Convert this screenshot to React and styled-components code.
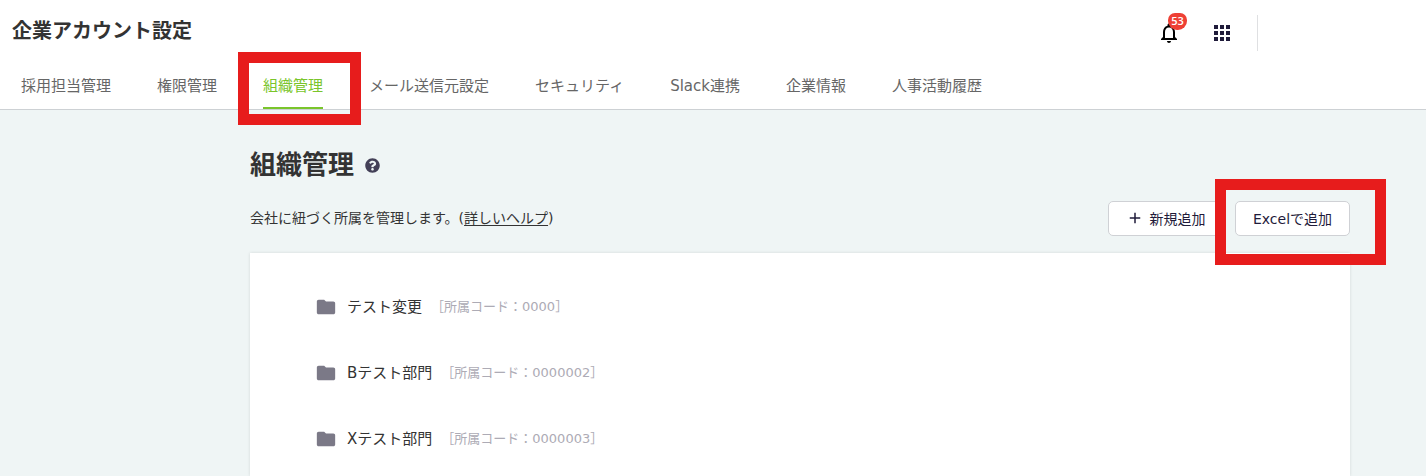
import React from 'react';
import styled, { createGlobalStyle } from 'styled-components';
import { MdAdd, MdApps, MdFolder, MdNotificationsNone } from 'react-icons/md';
import { FaQuestionCircle } from 'react-icons/fa';

const GlobalStyle = createGlobalStyle`
  * {
    box-sizing: border-box;
  }

  body {
    margin: 0;
    background: #fff;
    color: #333;
    font-family: 'DejaVu Sans', 'Noto Sans CJK JP', sans-serif;
    font-size: 14px;
  }

  button {
    font-family: inherit;
  }
`;

const Page = styled.div`
  min-height: 100vh;
  margin-right: 2px;
  display: flex;
  flex-direction: column;
`;

const Header = styled.header`
  border-bottom: 1px solid #cdd1d4;
`;

const TopBar = styled.div`
  height: 62px;
  padding: 0 168px 0 12px;
  display: flex;
  align-items: center;
  justify-content: space-between;
`;

const AppTitle = styled.div`
  font-size: 20px;
  line-height: 24px;
  font-weight: bold;
`;

const Actions = styled.div`
  display: flex;
  align-items: center;
  padding-top: 4px;
`;

const IconButton = styled.button`
  position: relative;
  display: flex;
  width: 24px;
  height: 24px;
  margin-right: ${(props) => props.$gap}px;
  padding: 0;
  border: none;
  background: none;
  color: ${(props) => props.$color};
  cursor: pointer;
`;

const Badge = styled.span`
  position: absolute;
  top: -8px;
  left: 11px;
  width: 19px;
  height: 17px;
  border-radius: 7px 7px 9px 9px;
  background: #ee4035;
  color: #fff;
  font-family: 'Open Sans', sans-serif;
  font-size: 11px;
  font-weight: 600;
  line-height: 15px;
  text-align: center;
`;

const Divider = styled.div`
  width: 1px;
  height: 36px;
  background: #dfe0e2;
`;

const Tabs = styled.nav`
  height: 47px;
  padding: 0 21px;
  display: flex;
  gap: 46px;
`;

const TabItem = styled.div`
  position: relative;
  display: flex;
`;

const Tab = styled.a`
  display: flex;
  align-items: center;
  padding-top: 2px;
  border-bottom: 2px solid ${(props) => (props.$active ? '#7ac52b' : 'transparent')};
  color: ${(props) => (props.$active ? '#7ac52b' : '#666')};
  font-size: 15px;
  line-height: 24px;
  text-decoration: none;
  white-space: nowrap;
`;

const Highlight = styled.div`
  position: absolute;
  z-index: 1;
  inset: ${(props) => props.$inset};
  border: 11px solid #e71c1c;
  pointer-events: none;
`;

const Main = styled.main`
  flex: 1;
  padding: 38px 76px 0 250px;
  display: flex;
  flex-direction: column;
  background: #eff5f5;
`;

const Heading = styled.div`
  display: flex;
  align-items: center;
  gap: 11px;
  color: #434057;
`;

const Title = styled.h1`
  margin: 0;
  color: #333;
  font-size: 26px;
  line-height: 34px;
`;

const Toolbar = styled.div`
  display: flex;
  align-items: center;
  justify-content: space-between;
  margin: 19px 0 17px;
`;

const Description = styled.p`
  margin: 0;
  padding-bottom: 2px;
  line-height: 20px;
`;

const HelpLink = styled.a`
  color: inherit;
  text-underline-offset: 2px;
`;

const Buttons = styled.div`
  display: flex;
  gap: 12px;
`;

const ButtonItem = styled.div`
  position: relative;
`;

const Button = styled.button`
  min-width: 115px;
  height: 35px;
  padding: 0 16px 2px;
  display: flex;
  align-items: center;
  justify-content: center;
  gap: 6px;
  border: 1px solid #cfd1d5;
  border-radius: 5px;
  background: #fff;
  color: #1f1b3a;
  font-size: 14px;
  white-space: nowrap;
  cursor: pointer;
`;

const Card = styled.ul`
  flex: 1;
  margin: 0;
  padding: 21px 65px 4px;
  background: #fff;
  box-shadow: 0 0 3px rgba(0, 0, 0, 0.12);
  list-style: none;
`;

const Row = styled.li`
  height: 66px;
  display: flex;
  align-items: center;
  color: #7b7987;
`;

const DepartmentName = styled.span`
  margin-left: 10px;
  color: #333;
  font-size: 15px;
  line-height: 24px;
`;

const DepartmentCode = styled.span`
  margin-left: 9px;
  color: #adabb5;
  font-size: 13px;
  line-height: 24px;
`;

const tabs = [
  '採用担当管理',
  '権限管理',
  '組織管理',
  'メール送信元設定',
  'セキュリティ',
  'Slack連携',
  '企業情報',
  '人事活動履歴',
];

const departments = [
  { name: 'テスト変更', code: '0000' },
  { name: 'Bテスト部門', code: '0000002' },
  { name: 'Xテスト部門', code: '0000003' },
];

const activeTab = '組織管理';

const App = () => (
  <>
    <GlobalStyle />
    <Page>
      <Header>
        <TopBar>
          <AppTitle>企業アカウント設定</AppTitle>
          <Actions>
            <IconButton $color="#000" $gap={29} aria-label="通知">
              <MdNotificationsNone size={24} />
              <Badge>53</Badge>
            </IconButton>
            <IconButton $color="#1f1b3a" $gap={23} aria-label="アプリ">
              <MdApps size={24} />
            </IconButton>
            <Divider />
          </Actions>
        </TopBar>
        <Tabs>
          {tabs.map((tab) => (
            <TabItem key={tab}>
              <Tab href="#" $active={tab === activeTab}>
                {tab}
              </Tab>
              {tab === activeTab && <Highlight $inset="-10px -38px -16px -25px" />}
            </TabItem>
          ))}
        </Tabs>
      </Header>
      <Main>
        <Heading>
          <Title>組織管理</Title>
          <FaQuestionCircle size={15} />
        </Heading>
        <Toolbar>
          <Description>
            会社に紐づく所属を管理します。(<HelpLink href="#">詳しいヘルプ</HelpLink>)
          </Description>
          <Buttons>
            <Button>
              <MdAdd size={18} />
              新規追加
            </Button>
            <ButtonItem>
              <Button>Excelで追加</Button>
              <Highlight $inset="-22px -36px -29px -20px" />
            </ButtonItem>
          </Buttons>
        </Toolbar>
        <Card>
          {departments.map(({ name, code }) => (
            <Row key={code}>
              <MdFolder size={22} />
              <DepartmentName>{name}</DepartmentName>
              <DepartmentCode>［所属コード：{code}］</DepartmentCode>
            </Row>
          ))}
        </Card>
      </Main>
    </Page>
  </>
);

export default App;
